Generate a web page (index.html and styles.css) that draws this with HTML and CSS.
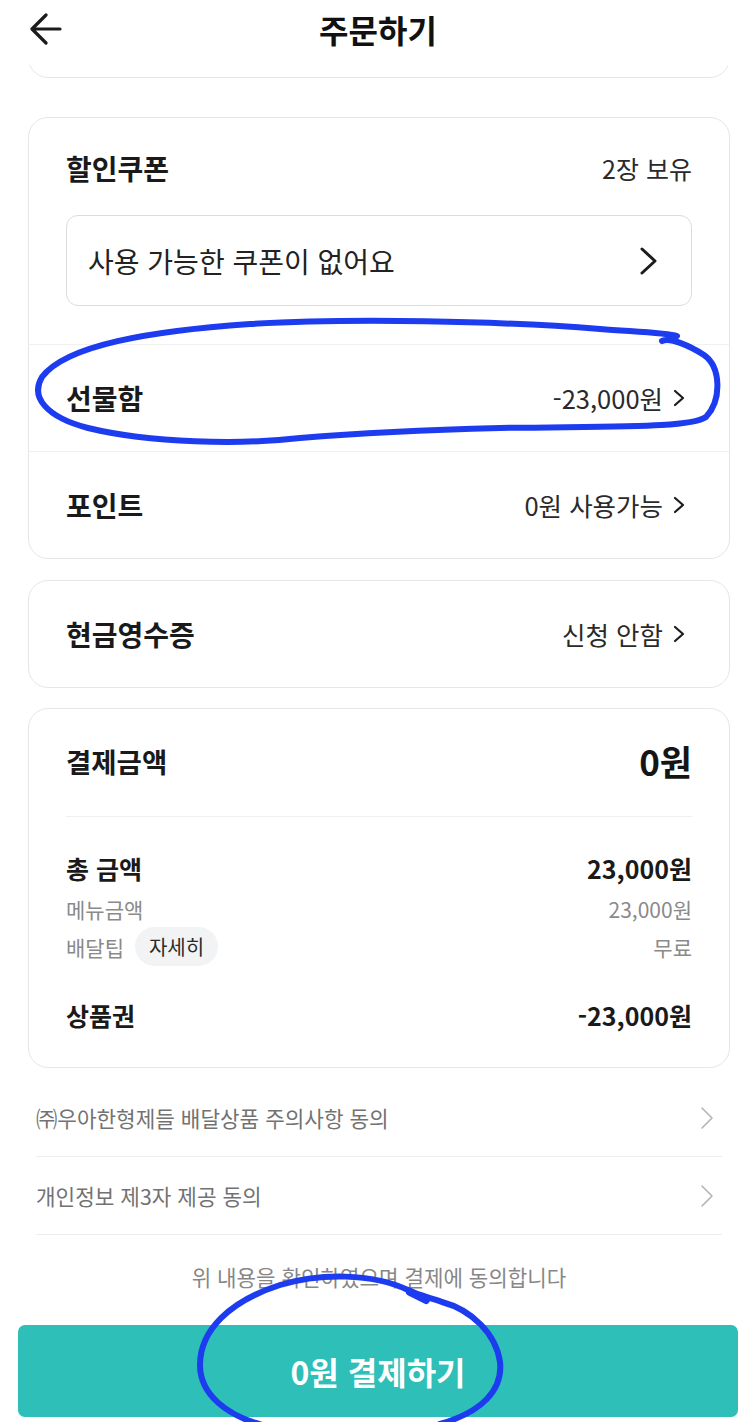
FILE: index.html
```html
<!DOCTYPE html>
<html lang="ko">
<head>
    <meta charset="UTF-8">
    <meta name="viewport" content="width=device-width, initial-scale=1.0">
    <title>주문하기</title>
    <link rel="stylesheet" href="styles.css">
</head>
<body>
    <header class="topbar">
        <button class="back" aria-label="뒤로">
            <svg width="32" height="32" viewBox="0 0 32 32"><path d="M30 16H3M16 2L2 16l14 14" fill="none" stroke="#1c1c1c" stroke-width="3.2" stroke-linecap="round" stroke-linejoin="round"/></svg>
        </button>
        <h1>주문하기</h1>
    </header>

    <main class="page">
        <div class="prev-card-clip"><div class="card prev-card"></div></div>

        <section class="card">
            <div class="coupon">
                <div class="coupon-head">
                    <h2>할인쿠폰</h2>
                    <span class="value">2장 보유</span>
                </div>
                <button class="coupon-select">
                    <span>사용 가능한 쿠폰이 없어요</span>
                    <svg width="18" height="28" viewBox="0 0 18 28"><path d="M2 2l13 12L2 26" fill="none" stroke="#1c1c1c" stroke-width="3" stroke-linecap="round" stroke-linejoin="round"/></svg>
                </button>
            </div>
            <div class="row">
                <h2>선물함</h2>
                <span class="value">-23,000원
                    <svg class="chev" width="12" height="18" viewBox="0 0 12 18"><path d="M2 2l8 7-8 7" fill="none" stroke="#1c1c1c" stroke-width="2.2" stroke-linecap="round" stroke-linejoin="round"/></svg>
                </span>
            </div>
            <div class="row">
                <h2>포인트</h2>
                <span class="value">0원 사용가능
                    <svg class="chev" width="12" height="18" viewBox="0 0 12 18"><path d="M2 2l8 7-8 7" fill="none" stroke="#1c1c1c" stroke-width="2.2" stroke-linecap="round" stroke-linejoin="round"/></svg>
                </span>
            </div>
        </section>

        <section class="card gap-sm">
            <div class="row first">
                <h2>현금영수증</h2>
                <span class="value">신청 안함
                    <svg class="chev" width="12" height="18" viewBox="0 0 12 18"><path d="M2 2l8 7-8 7" fill="none" stroke="#1c1c1c" stroke-width="2.2" stroke-linecap="round" stroke-linejoin="round"/></svg>
                </span>
            </div>
        </section>

        <section class="card gap-sm summary">
            <div class="summary-head">
                <h2>결제금액</h2>
                <strong class="grand">0원</strong>
            </div>
            <div class="summary-divider"></div>
            <div class="line strong">
                <span>총 금액</span>
                <span>23,000원</span>
            </div>
            <div class="line sub">
                <span>메뉴금액</span>
                <span>23,000원</span>
            </div>
            <div class="line sub tip">
                <span>배달팁 <button class="pill">자세히</button></span>
                <span>무료</span>
            </div>
            <div class="line strong voucher">
                <span>상품권</span>
                <span>-23,000원</span>
            </div>
        </section>

        <ul class="agree-list">
            <li>
                <span>㈜우아한형제들 배달상품 주의사항 동의</span>
                <svg width="14" height="24" viewBox="0 0 14 24"><path d="M2 2l10 10L2 22" fill="none" stroke="#b4b4b4" stroke-width="1.6" stroke-linecap="round" stroke-linejoin="round"/></svg>
            </li>
            <li>
                <span>개인정보 제3자 제공 동의</span>
                <svg width="14" height="24" viewBox="0 0 14 24"><path d="M2 2l10 10L2 22" fill="none" stroke="#b4b4b4" stroke-width="1.6" stroke-linecap="round" stroke-linejoin="round"/></svg>
            </li>
        </ul>

        <p class="agree-note">위 내용을 확인하였으며 결제에 동의합니다</p>
    </main>

    <div class="pay-bar">
        <button class="pay">0원 결제하기</button>
    </div>

    <!-- hand-drawn marks over the screenshot -->
    <svg class="marks" width="756" height="1422" viewBox="0 0 756 1422">
        <path d="M662 341C670 337 690 346 704 355C721 367 722 400 706 417C690 428 620 426 500 428C420 430 360 433 300 438C240 445 150 443 88 428C46 417 30 397 42 377C66 345 150 331 250 324C350 318 500 321 600 329C640 332 668 333 677 336"/>
        <path d="M266 1426C226 1416 200 1394 200 1365C200 1330 230 1301 280 1285C320 1273 372 1273 408 1290C420 1296 432 1298 442 1302C472 1310 496 1334 500 1362C503 1390 482 1412 440 1424"/>
        <path d="M410 1292l16 8" stroke-width="8"/>
    </svg>
</body>
</html>
```

FILE: styles.css
```css
body {
    margin: 0;
    background: #fff;
    color: #1c1c1c;
    font-family: "Noto Sans CJK KR", "Noto Sans", sans-serif;
    position: relative;
}
h1, h2, p, ul {
    margin: 0;
    padding: 0;
}
button {
    font-family: inherit;
    border: none;
    background: none;
    padding: 0;
    cursor: pointer;
}

.topbar {
    display: grid;
    grid-template-columns: 1fr auto 1fr;
    align-items: center;
    height: 57px;
    padding: 0 30px;
    margin-bottom: 8px;
}
.back {
    justify-self: start;
    display: flex;
}
.topbar h1 {
    font-size: 32px;
    line-height: 40px;
    font-weight: 700;
    color: #111;
}

.page {
    padding: 0 26px 0 28px;
}

.card {
    border: 1px solid #e6e6e6;
    border-radius: 20px;
    background: #fff;
    margin-top: 39px;
}
.card.gap-sm {
    margin-top: 21px;
}
.card.summary {
    margin-top: 20px;
}
.prev-card-clip {
    height: 13px;
    overflow: hidden;
    display: flex;
    align-items: flex-end;
}
.prev-card {
    margin-top: 0;
    height: 60px;
    width: 100%;
    box-sizing: border-box;
    flex: none;
}

.card h2 {
    font-size: 28px;
    line-height: 36px;
    font-weight: 700;
    color: #1a1a1a;
}
.value {
    display: flex;
    align-items: center;
    font-size: 25.5px;
    line-height: 36px;
    color: #2a2a2a;
}
.chev {
    margin-left: 10px;
}

.coupon {
    padding: 32px 37px 38px;
}
.coupon-head {
    display: flex;
    justify-content: space-between;
    align-items: center;
    height: 36px;
}
.coupon-head .value {
    font-size: 25px;
}
.coupon-select {
    margin-top: 29px;
    width: 100%;
    height: 91px;
    display: flex;
    align-items: center;
    justify-content: space-between;
    border: 1px solid #dcdcdc;
    border-radius: 12px;
    padding: 0 33px 0 21px;
    font-size: 28px;
    color: #222;
    box-sizing: border-box;
}

.row {
    display: flex;
    justify-content: space-between;
    align-items: center;
    height: 106px;
    padding: 0 44px 0 37px;
    border-top: 1px solid #f1f1f1;
}
.row.first {
    border-top: none;
}

.summary {
    padding: 30px 37px 35px;
}
.summary h2 {
    font-size: 27.5px;
}
.summary-head {
    display: flex;
    justify-content: space-between;
    align-items: center;
    height: 44px;
}
.grand {
    font-size: 35px;
    line-height: 44px;
    font-weight: 700;
    color: #151515;
}
.summary-divider {
    height: 1px;
    background: #efefef;
    margin-top: 33px;
}
.line {
    display: flex;
    justify-content: space-between;
    align-items: center;
    height: 34px;
}
.line.strong {
    font-size: 25px;
    font-weight: 700;
    color: #1a1a1a;
    margin-top: 34px;
}
.line.sub {
    font-size: 21px;
    color: #8a8a8a;
    margin-top: 7px;
}
.line.tip {
    height: 39px;
    margin-top: 1px;
}
.line.tip span:first-child {
    display: flex;
    align-items: center;
}
.line.voucher {
    margin-top: 32px;
}
.pill {
    margin-left: 11px;
    height: 39px;
    padding: 0 14px;
    border-radius: 20px;
    background: #f2f3f5;
    font-size: 20px;
    color: #2a2a2a;
}

.agree-list {
    list-style: none;
    margin: 11px 8px 0;
}
.agree-list li {
    display: flex;
    justify-content: space-between;
    align-items: center;
    height: 77px;
    padding-right: 8px;
    border-bottom: 1px solid #ededed;
    font-size: 21.3px;
    color: #727272;
}
.agree-note {
    margin-top: 27px;
    text-align: center;
    font-size: 21.2px;
    line-height: 30px;
    color: #878787;
}

.pay-bar {
    padding: 33px 18px 5px;
}
.pay {
    width: 100%;
    height: 92px;
    border-radius: 7px;
    background: #2dbfb8;
    color: #fff;
    font-size: 32px;
    font-weight: 700;
}

.marks {
    position: absolute;
    top: 0;
    left: 0;
    pointer-events: none;
    fill: none;
    stroke: #1d3cf0;
    stroke-width: 6;
    stroke-linecap: round;
    stroke-linejoin: round;
}
```
